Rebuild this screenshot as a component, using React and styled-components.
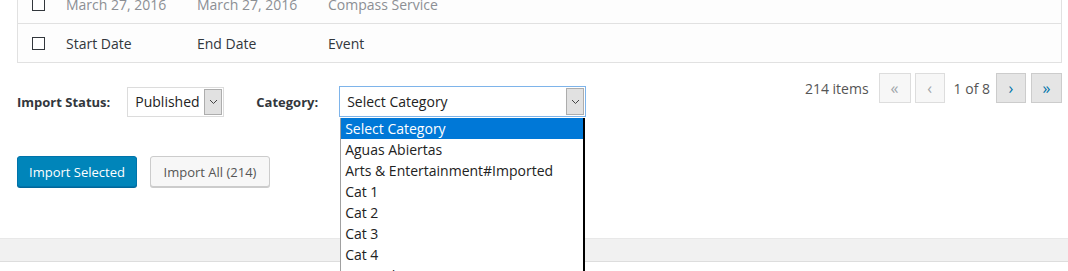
import React from 'react'
import styled, { createGlobalStyle } from 'styled-components'

const GlobalStyle = createGlobalStyle`
  html, body {
    margin: 0;
    padding: 0;
    background: #fff;
    font-family: "Open Sans", "Noto Sans", sans-serif;
    color: #32373c;
    overflow: hidden;
  }
`

const Page = styled.div`
  position: relative;
  width: 1068px;
  height: 271px;
  overflow: hidden;
`

const Content = styled.div`
  padding: 0 6px 0 17px;
`

const Table = styled.div`
  margin-top: -16px;
  border: 1px solid #e1e1e1;
  background: #fdfdfd;
`

const Row = styled.div`
  display: grid;
  grid-template-columns: 48px 131px 131px 1fr;
  align-items: center;
  height: 38px;
  border-top: ${(p) => (p.first ? 'none' : '1px solid #e1e1e1')};
  font-size: 14px;
  color: ${(p) => (p.muted ? '#8c8f94' : '#32373c')};
`

const CheckCell = styled.div`
  padding-left: 14px;
  display: flex;
  align-items: center;
`

const Checkbox = styled.span`
  display: block;
  width: 11px;
  height: 11px;
  border: 1px solid #32373c;
  background: #fff;
`

const Cell = styled.div`
  white-space: nowrap;
`

const Nav = styled.div`
  display: flex;
  justify-content: space-between;
  align-items: flex-start;
`

const Actions = styled.div`
  display: flex;
  flex-direction: column;
`

const Filters = styled.div`
  display: flex;
  align-items: center;
  margin-top: 23px;
`

const Label = styled.label`
  font-size: 13px;
  font-weight: 700;
  color: #32373c;
  margin-right: ${(p) => p.gap}px;
  margin-left: ${(p) => p.offset || 0}px;
`

const SelectBox = styled.div`
  position: relative;
  display: flex;
  align-items: stretch;
  box-sizing: border-box;
  width: ${(p) => p.w}px;
  height: ${(p) => p.h}px;
  border: 1px solid ${(p) => (p.focused ? '#7eb4ea' : '#dcdcdc')};
  background: #fff;
  font-size: 14px;
  color: #222;
`

const SelectValue = styled.div`
  flex: 1;
  display: flex;
  align-items: center;
  padding-left: ${(p) => p.pad}px;
  white-space: nowrap;
`

const Arrow = styled.div`
  width: 16px;
  display: flex;
  align-items: center;
  justify-content: center;
  background: #e1e1e1;
  border: 1px solid #adadad;
  margin: 1px;
`

const DropList = styled.ul`
  position: absolute;
  top: 31px;
  left: 0;
  width: 245px;
  margin: 0;
  padding: 0;
  list-style: none;
  background: #fff;
  border-left: 1px solid #a0a0a0;
  border-right: 2px solid #000;
  box-sizing: border-box;
  z-index: 5;
`

const Option = styled.li`
  height: 21px;
  line-height: 21px;
  padding-left: 4px;
  font-size: 14px;
  white-space: nowrap;
  background: ${(p) => (p.selected ? '#0078d7' : '#fff')};
  color: ${(p) => (p.selected ? '#fff' : '#222')};
`

const Buttons = styled.div`
  display: flex;
  gap: 13px;
  margin-top: 39px;
`

const Button = styled.button`
  box-sizing: border-box;
  height: 31px;
  width: 120px;
  padding: 0 8px;
  border-radius: 3px;
  font-family: inherit;
  font-size: 13px;
  border: 1px solid ${(p) => (p.primary ? '#0073aa' : '#cccccc')};
  background: ${(p) => (p.primary ? '#0085ba' : '#f7f7f7')};
  color: ${(p) => (p.primary ? '#fff' : '#555')};
  box-shadow: ${(p) => (p.primary ? '0 1px 0 #006799' : '0 1px 0 #cccccc')};
`

const Pagination = styled.div`
  display: flex;
  align-items: center;
  margin-top: 10px;
  font-size: 14px;
  color: #555;
`

const Count = styled.span`
  margin-right: 10px;
`

const PageButton = styled.span`
  box-sizing: border-box;
  display: flex;
  align-items: center;
  justify-content: center;
  width: ${(p) => p.w || 30}px;
  height: 30px;
  margin-right: ${(p) => p.mr || 0}px;
  font-size: 16px;
  border: 1px solid ${(p) => (p.disabled ? '#ddd' : '#ccc')};
  background: ${(p) => (p.disabled ? '#f7f7f7' : '#e5e5e5')};
  color: ${(p) => (p.disabled ? '#a0a5aa' : '#0073aa')};
`

const PageInfo = styled.span`
  margin: 0 6px 0 9px;
`

const Footer = styled.div`
  margin-top: 51px;
  height: 22px;
  background: #f1f1f1;
  border-top: 1px solid #e8e8e8;
  border-bottom: 1px solid #dddddd;
`

const Chevron = () => (
  <svg width="9" height="6" viewBox="0 0 9 6">
    <path d="M1 1l3.5 3.5L8 1" fill="none" stroke="#444" strokeWidth="1" />
  </svg>
)

const categories = [
  'Select Category',
  'Aguas Abiertas',
  'Arts & Entertainment#Imported',
  'Cat 1',
  'Cat 2',
  'Cat 3',
  'Cat 4',
  'Fiesta de Año Nuevo',
]

export default function App() {
  return (
    <Page>
      <GlobalStyle />
      <Content>
        <Table>
          <Row first muted>
            <CheckCell><Checkbox /></CheckCell>
            <Cell>March 27, 2016</Cell>
            <Cell>March 27, 2016</Cell>
            <Cell>Compass Service</Cell>
          </Row>
          <Row>
            <CheckCell><Checkbox /></CheckCell>
            <Cell>Start Date</Cell>
            <Cell>End Date</Cell>
            <Cell>Event</Cell>
          </Row>
        </Table>

        <Nav>
          <Actions>
            <Filters>
              <Label gap={17}>Import Status:</Label>
              <SelectBox w={97} h={30}>
                <SelectValue pad={7}>Published</SelectValue>
                <Arrow><Chevron /></Arrow>
              </SelectBox>
              <Label gap={21} offset={32}>Category:</Label>
              <SelectBox w={247} h={31} focused>
                <SelectValue pad={7}>Select Category</SelectValue>
                <Arrow><Chevron /></Arrow>
                <DropList>
                  {categories.map((c, i) => (
                    <Option key={c} selected={i === 0}>{c}</Option>
                  ))}
                </DropList>
              </SelectBox>
            </Filters>
            <Buttons>
              <Button primary>Import Selected</Button>
              <Button>Import All (214)</Button>
            </Buttons>
          </Actions>

          <Pagination>
            <Count>214 items</Count>
            <PageButton disabled w={32} mr={4}>«</PageButton>
            <PageButton disabled>‹</PageButton>
            <PageInfo>1 of 8</PageInfo>
            <PageButton mr={5}>›</PageButton>
            <PageButton w={31}>»</PageButton>
          </Pagination>
        </Nav>
      </Content>
      <Footer />
    </Page>
  )
}
